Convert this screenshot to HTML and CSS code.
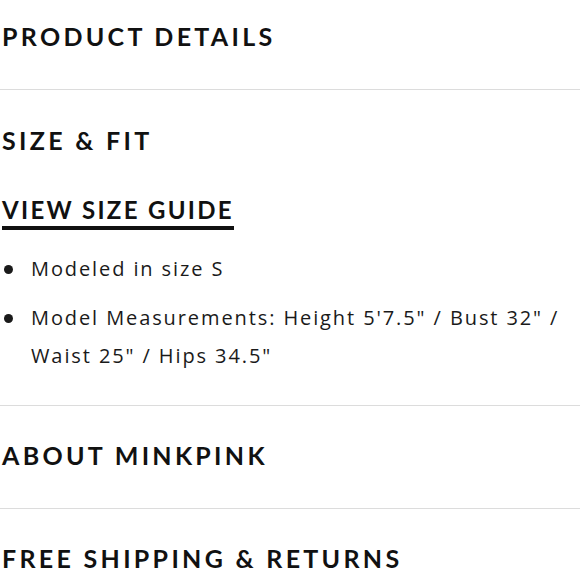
FILE: index.html
```html
<!DOCTYPE html>
<html>
<head>
<meta charset="utf-8">
<link rel="stylesheet" href="styles.css">
</head>
<body>
<div class="details">
  <section class="panel panel-first">
    <h2 class="panel-title">PRODUCT DETAILS</h2>
  </section>
  <section class="panel panel-open">
    <h2 class="panel-title">SIZE &amp; FIT</h2>
    <a class="size-guide" href="#">VIEW SIZE GUIDE</a>
    <ul class="fit-list">
      <li>Modeled in size S</li>
      <li>Model Measurements: Height 5'7.5" / Bust 32" / Waist 25" / Hips 34.5"</li>
    </ul>
  </section>
  <section class="panel">
    <h2 class="panel-title">ABOUT MINKPINK</h2>
  </section>
  <section class="panel panel-last">
    <h2 class="panel-title">FREE SHIPPING &amp; RETURNS</h2>
  </section>
</div>
</body>
</html>
```

FILE: styles.css
```css
html, body {
  margin: 0;
  padding: 0;
  background: #ffffff;
}
body {
  width: 580px;
  overflow: hidden;
}
.details {
  display: flex;
  flex-direction: column;
}
.panel {
  border-bottom: 1px solid #dcdcdc;
  padding: 34px 0 38px 2px;
}
.panel-first {
  padding-top: 21px;
}
.panel-open {
  display: flex;
  flex-direction: column;
  align-items: flex-start;
  padding-top: 35px;
  padding-bottom: 30px;
}
.panel-last {
  border-bottom: none;
}
.panel-title {
  margin: 0;
  font-family: "Lato", sans-serif;
  font-weight: 700;
  font-size: 25px;
  line-height: 30px;
  letter-spacing: 3.3px;
  color: #111111;
}
.size-guide {
  display: inline-block;
  margin-top: 40px;
  font-family: "Lato", sans-serif;
  font-weight: 700;
  font-size: 24px;
  line-height: 30px;
  letter-spacing: 2.3px;
  color: #111111;
  text-decoration: none;
  border-bottom: 4px solid #111111;
  padding-bottom: 1px;
}
.fit-list {
  list-style: none;
  margin: 20px 0 0 0;
  padding: 0;
  font-family: "Open Sans", sans-serif;
  font-size: 20px;
  line-height: 38px;
  letter-spacing: 1.9px;
  color: #1a1a1a;
}
.fit-list li {
  display: flex;
  gap: 18px;
  margin-bottom: 11px;
}
.fit-list li::before {
  content: "";
  flex: 0 0 9px;
  width: 9px;
  height: 9px;
  border-radius: 50%;
  background: #1a1a1a;
  margin-top: 15px;
  margin-left: 2px;
}
.fit-list li:last-child {
  margin-bottom: 0;
}
```
